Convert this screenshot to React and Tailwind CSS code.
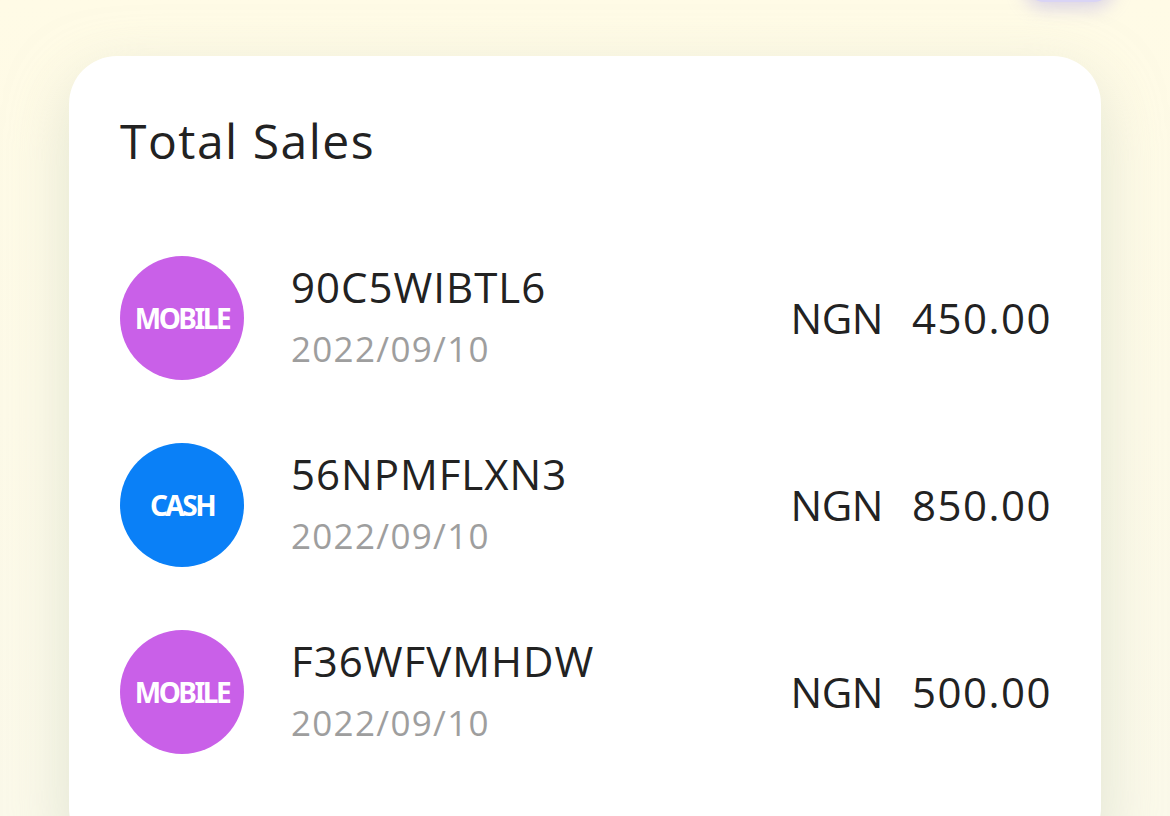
const sales = [
  { id: '90C5WIBTL6', date: '2022/09/10', type: 'MOBILE', amount: '450.00' },
  { id: '56NPMFLXN3', date: '2022/09/10', type: 'CASH', amount: '850.00' },
  { id: 'F36WFVMHDW', date: '2022/09/10', type: 'MOBILE', amount: '500.00' },
]

export default function App() {
  return (
    <div className="relative h-[816px] w-[1170px] overflow-hidden bg-gradient-to-b from-[#fffbe6] to-[#fbf9ea]" style={{ fontFamily: '"Open Sans", "Noto Sans", sans-serif' }}>
      {/* top-right button, mostly scrolled off */}
      <div className="absolute right-[56px] top-[-40px] h-[42px] w-[90px] rounded-full bg-[#d9d4f5] shadow-[0_6px_18px_rgba(170,160,230,0.45)]" />
      <div className="pl-[69px] pt-[56px]">
        <div className="h-[800px] w-[1032px] rounded-[48px] bg-white px-[51px] pt-[61px] shadow-[0_20px_60px_rgba(200,210,190,0.55)]">
          <h1 className="text-[48px] leading-none tracking-[1.5px] text-[#222]">Total Sales</h1>
          <div className="mt-[91px] flex flex-col gap-[63px]">
            {sales.map((s) => (
              <div key={s.id} className="flex items-center">
                <div className={`flex h-[124px] w-[124px] shrink-0 items-center justify-center rounded-full ${s.type === 'CASH' ? 'bg-[#0a80f7]' : 'bg-[#c960e8]'}`}>
                  <span className="text-[28px] font-bold tracking-[-2.5px] text-white" style={{ fontFamily: '"Noto Sans", sans-serif' }}>{s.type}</span>
                </div>
                <div className="-mt-[3px] ml-[47px] flex flex-col">
                  <span className="text-[42px] leading-[50px] tracking-[1px] text-[#222]">{s.id}</span>
                  <span className="mt-[15px] text-[35px] leading-[44px] tracking-[1.3px] text-[#9e9e9e]">{s.date}</span>
                </div>
                <div className="-mr-[2px] ml-auto flex gap-[29px] text-[42px] leading-none text-[#222]">
                  <span className="tracking-[-0.5px]">NGN</span>
                  <span className="tracking-[1.5px]">{s.amount}</span>
                </div>
              </div>
            ))}
          </div>
        </div>
      </div>
    </div>
  )
}
